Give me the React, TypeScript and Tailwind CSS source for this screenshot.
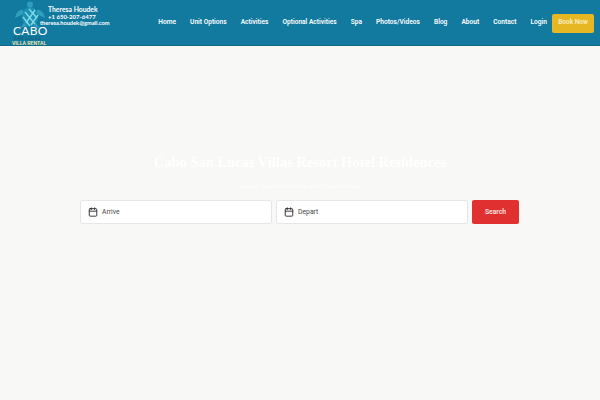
import { Calendar } from 'lucide-react'

const NAV = ['Home', 'Unit Options', 'Activities', 'Optional Activities', 'Spa', 'Photos/Videos', 'Blog', 'About', 'Contact', 'Login']

function Turtle() {
  return (
    <svg viewBox="0 0 30 28" className="w-[30px] h-[28px]">
      <path d="M15 6 C21 6 24 12 23 18 C22 23 18 26 15 26 C12 26 8 23 7 18 C6 12 9 6 15 6 Z" fill="#1c8fb3" />
      <path d="M10 11 L20 23 M14 8 L22 17 M8 16 L15 25 M20 9 L11 22 M23 14 L16 24" stroke="#7fdbe6" strokeWidth="1.4" />
      <ellipse cx="15" cy="3.5" rx="3" ry="3" fill="#2f9dbb" />
      <path d="M8 9 C4 8 1 12 0 17 C3 16 6 14 8 13 Z" fill="#2f9dbb" />
      <path d="M22 9 C26 8 29 12 30 17 C27 16 24 14 22 13 Z" fill="#2f9dbb" />
      <path d="M9 22 L5 27 L12 25 Z M21 22 L25 27 L18 25 Z" fill="#2f9dbb" />
    </svg>
  )
}

function DateField({ label }: { label: string }) {
  return (
    <div className="flex-1 h-[24px] flex items-center bg-white border border-[#e6e6e6] rounded-[2px] pl-[7px]">
      <Calendar className="w-[10px] h-[10px] text-[#2b2b2b]" strokeWidth={2.2} />
      <span className="ml-[4px] text-[6.8px] text-[#444]">{label}</span>
    </div>
  )
}

export default function App() {
  return (
    <div className="w-[600px] h-[400px] overflow-hidden bg-[#f8f8f6] font-['Roboto',sans-serif] will-change-[opacity]">
      {/* Header */}
      <header className="relative h-[46px] bg-[#12799f] border-b border-[#0f6a86] flex items-center justify-between">
        <div className="relative w-[125px] h-[46px]">
          <div className="absolute left-[15px] top-[1px]"><Turtle /></div>
          <div className="absolute left-[48px] top-[6px] text-[6.8px] leading-[7px] font-bold text-white font-['Lato',sans-serif]">Theresa Houdek</div>
          <div className="absolute left-[48px] top-[13px] text-[6px] leading-[7px] font-bold text-white font-['Lato',sans-serif]">+1 650-207-6477</div>
          <div className="absolute left-[40px] top-[19px] text-[5.7px] leading-[7px] font-bold text-white font-['Lato',sans-serif]">theresa.houdek@gmail.com</div>
          <div className="absolute left-[13px] top-[26px] text-[12px] leading-[10px] tracking-[0.3px] text-white font-['Lato',sans-serif]">CABO</div>
          <div className="absolute left-[14px] top-[37px] text-[4.6px] leading-[4px] tracking-[0.3px] text-[#0d5c78]">SAN LUCAS</div>
          <div className="absolute left-[12px] top-[41px] text-[5.2px] leading-[5px] font-semibold text-[#f2e6a8]">VILLA RENTAL</div>
        </div>
        <nav className="flex items-center gap-[14.1px] pr-[6px] pt-[1px] text-[6.6px] font-semibold text-white">
          {NAV.map(n => <a key={n}>{n}</a>)}
          <button className="w-[42px] h-[19px] ml-[-9.1px] bg-[#e7b723] rounded-[2px] text-[6.5px] font-semibold text-[#f6efc8]">Book Now</button>
        </nav>
      </header>

      {/* Hero */}
      <main className="flex flex-col items-center pt-[107px]">
        <h1 className="text-[14.5px] leading-[18px] font-bold text-white font-['Liberation_Serif',serif]">Cabo San Lucas Villas Resort Hotel Residences</h1>
        <p className="mt-[10px] text-[6.2px] leading-[10px] text-white">Luxury Vacation Rentals and Villas Booking</p>
        <div className="mt-[9px] w-[440px] pr-[1px] flex items-stretch gap-[4px]">
          <DateField label="Arrive" />
          <DateField label="Depart" />
          <button className="w-[47px] h-[24px] bg-[#e0302f] rounded-[2px] text-[6.8px] font-semibold text-[#fbe4e4]">Search</button>
        </div>
      </main>
    </div>
  )
}
